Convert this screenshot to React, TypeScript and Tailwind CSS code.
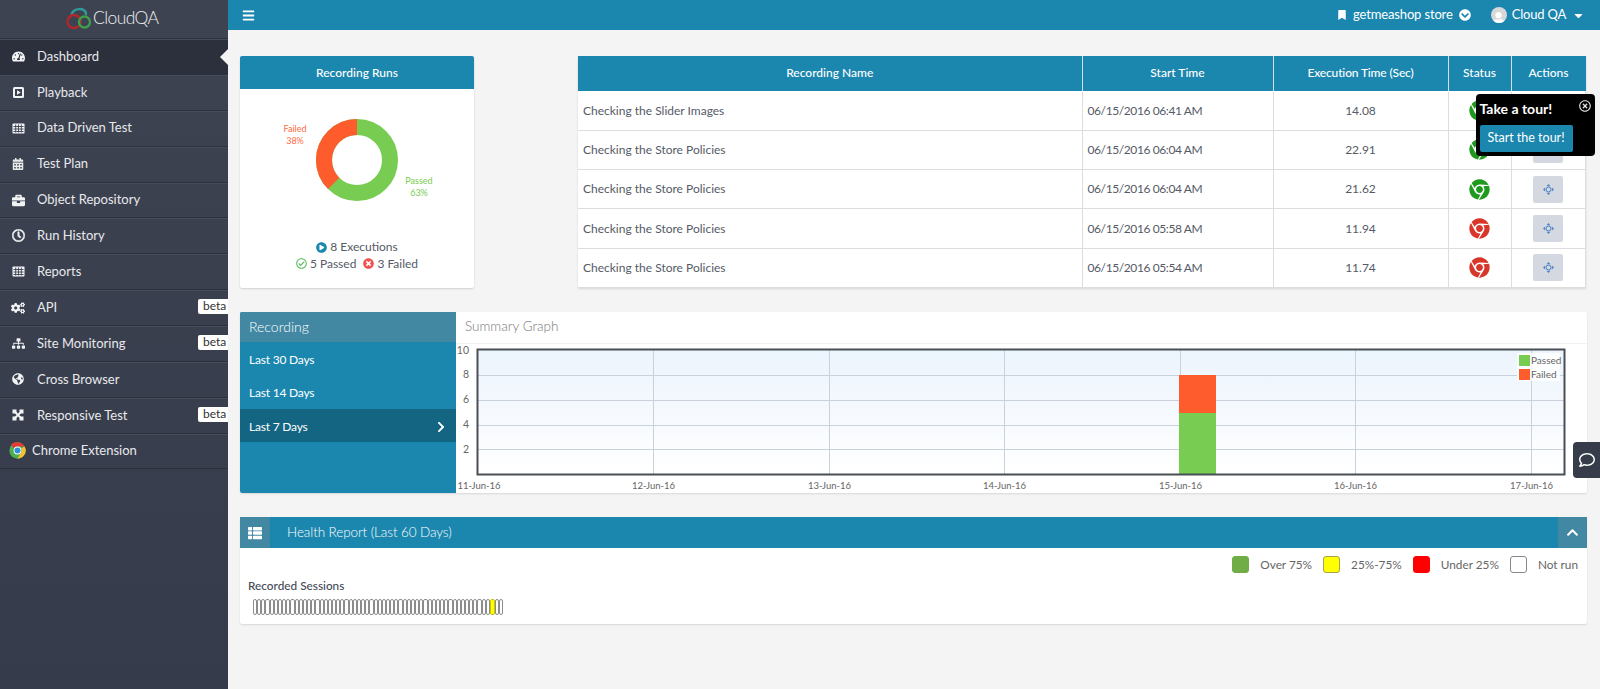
import React from "react";
import {
  FaTachometerAlt, FaCalendarAlt, FaBriefcase, FaRegClock, FaCogs, FaSitemap,
  FaGlobeAmericas, FaBars, FaBookmark, FaChevronCircleDown, FaUser, FaCaretDown, FaChrome,
  FaThList, FaChevronUp, FaChevronRight, FaPlayCircle, FaRegCheckCircle, FaTimesCircle, FaRegTimesCircle, FaRegComment,
} from "react-icons/fa";

function PlayBox() {
  return (
    <svg width="13" height="13" viewBox="0 0 13 13">
      <rect x="1" y="1" width="11" height="11" rx="1.500" fill="#f2f3f5" />
      <rect x="3" y="3" width="7" height="7" fill="#3a404e" />
      <path d="M5 4.200 L8.800 6.500 L5 8.800 Z" fill="#f2f3f5" />
    </svg>
  );
}

function GridIcon() {
  return (
    <svg width="13" height="11" viewBox="0 0 13 11">
      <rect x="0.500" y="0.500" width="12" height="10" rx="0.800" fill="#f2f3f5" />
      <path d="M3.700 1.500V9.500M6.500 1.500V9.500M9.300 1.500V9.500M1.500 3.500H11.500M1.500 6H11.500M1.500 8.500H11.500" stroke="#3a404e" strokeWidth="0.900" fill="none" />
    </svg>
  );
}

function ResponsiveIcon() {
  return (
    <svg width="12" height="12" viewBox="0 0 12 12" fill="#f2f3f5">
      <path d="M0.500 0.500H4.500V4.500H0.500ZM7.500 0.500H11.500V4.500H7.500ZM0.500 7.500H4.500V11.500H0.500ZM7.500 7.500H11.500V11.500H7.500Z" />
      <path d="M3 3L9 9M9 3L3 9" stroke="#f2f3f5" strokeWidth="2" />
    </svg>
  );
}

function Dash() { return <FaTachometerAlt className="text-[13px] text-[#f2f3f5]" />; }
function Cal() { return <FaCalendarAlt className="text-[12px] text-[#e8ece8]" />; }
function Brief() { return <FaBriefcase className="text-[13px] text-[#f2f3f5]" />; }
function Clock() { return <FaRegClock className="text-[13px] text-[#f2f3f5] stroke-[20px]" />; }
function Cogs() { return <FaCogs className="text-[14px] text-[#f2f3f5]" />; }
function Site() { return <FaSitemap className="text-[13px] text-[#f2f3f5]" />; }
function Globe() { return <FaGlobeAmericas className="text-[12px] text-[#f2f3f5]" />; }

const nav = [
  { label: "Dashboard", Icon: Dash, active: true },
  { label: "Playback", Icon: PlayBox },
  { label: "Data Driven Test", Icon: GridIcon },
  { label: "Test Plan", Icon: Cal },
  { label: "Object Repository", Icon: Brief },
  { label: "Run History", Icon: Clock },
  { label: "Reports", Icon: GridIcon },
  { label: "API", Icon: Cogs, beta: true },
  { label: "Site Monitoring", Icon: Site, beta: true },
  { label: "Cross Browser", Icon: Globe },
  { label: "Responsive Test", Icon: ResponsiveIcon, beta: true },
];

const rows = [
  ["Checking the Slider Images", "06/15/2016 06:41 AM", "14.08", "text-[#1f9a1f]"],
  ["Checking the Store Policies", "06/15/2016 06:04 AM", "22.91", "text-[#1f9a1f]"],
  ["Checking the Store Policies", "06/15/2016 06:04 AM", "21.62", "text-[#1f9a1f]"],
  ["Checking the Store Policies", "06/15/2016 05:58 AM", "11.94", "text-[#d9362b]"],
  ["Checking the Store Policies", "06/15/2016 05:54 AM", "11.74", "text-[#d9362b]"],
];

function ChromeLogo() {
  return (
    <svg width="17" height="17" viewBox="0 0 48 48">
      <circle cx="24" cy="24" r="23" fill="#4caf50" />
      <path d="M24 1a23 23 0 0 1 20 11.500H24a12 12 0 0 0-10.400 6L6 6.500A23 23 0 0 1 24 1z" fill="#e53935" />
      <path d="M44 12.500A23 23 0 0 1 24 47l10.400-17.500A12 12 0 0 0 34.400 18z" fill="#fbc02d" />
      <circle cx="24" cy="24" r="11" fill="#fff" />
      <circle cx="24" cy="24" r="8.500" fill="#2f8fd8" />
    </svg>
  );
}

function Logo() {
  return (
    <svg width="26" height="22" viewBox="0 0 26 22" fill="none" strokeWidth="2.400">
      <path d="M6 9 C4 1 21 -1 20 8" stroke="#2f9a98" />
      <circle cx="8" cy="14.500" r="6.500" stroke="#b3262a" />
      <circle cx="18.500" cy="15" r="5.500" stroke="#3f9e4b" />
    </svg>
  );
}

function MoveIcon() {
  return (
    <svg width="11" height="11" viewBox="0 0 11 11" fill="#4a84c4">
      <path d="M5.500 0L7.500 2.200H3.500ZM5.500 11L3.500 8.800H7.500ZM0 5.500L2.200 3.500V7.500ZM11 5.500L8.800 7.500V3.500Z" />
      <circle cx="5.500" cy="5.500" r="2.400" fill="none" stroke="#4a84c4" strokeWidth="1" />
    </svg>
  );
}

function Sidebar() {
  return (
    <aside className="w-[228px] shrink-0 min-h-[689px] bg-gradient-to-b from-[#3d4351] to-[#353b4a] text-[#e8e9ec]">
      <div className="h-[38px] flex items-center pl-[66px] gap-[1px] pb-[2px]">
        <Logo />
        <span className="text-[17.500px] font-light text-[#eef0f2] tracking-[-0.6px]">CloudQA</span>
      </div>
      {nav.map(({ label, Icon, active, beta }) => (
        <div
          key={label}
          className={`relative h-[35.900px] flex items-center border-t border-t-[#2d313d] shadow-[inset_0_1px_0_#474c5a] text-[13px] ${active ? "bg-[#2c2f3c]" : ""}`}
        >
          <span className="w-[37px] pr-[1px] flex justify-center shrink-0">
            <Icon />
          </span>
          <span>{label}</span>
          {beta && (
            <span className="absolute right-0 top-[9px] w-[30px] h-[15px] leading-[14px] pl-[5px] bg-white text-[#333] text-[12px] rounded-l-[2px]">
              beta
            </span>
          )}
          {active && (
            <span className="absolute right-0 top-[10px] w-0 h-0 border-y-[8px] border-y-transparent border-r-[8px] border-r-[#f4f4f4]" />
          )}
        </div>
      ))}
      <div className="h-[36px] flex items-center border-y border-[#2d313d] shadow-[inset_0_1px_0_#474c5a] text-[13px]">
        <span className="pl-[9px] pr-[6px] flex"><ChromeLogo /></span>
        <span>Chrome Extension</span>
      </div>
    </aside>
  );
}

function Topbar() {
  return (
    <header className="h-[30px] bg-[#1b86ae] flex items-center text-white text-[13px] pl-[14px] pr-[15px]">
      <FaBars className="text-[13px]" />
      <div className="ml-auto flex items-center">
        <FaBookmark className="text-[10px] mr-[6px]" />
        <span className="tracking-[-0.15px]">getmeashop store</span>
        <FaChevronCircleDown className="text-[12px] ml-[6px] mr-[20px]" />
        <span className="w-[16px] h-[16px] rounded-full bg-[#d8d8d8] overflow-hidden flex items-end justify-center mr-[5px]">
          <FaUser className="text-[13px] text-white translate-y-[2px]" />
        </span>
        <span className="tracking-[-0.2px]">Cloud QA</span>
        <FaCaretDown className="text-[13px] ml-[6px]" />
      </div>
    </header>
  );
}

function RunsCard() {
  return (
    <section className="w-[234px] h-[232px] shrink-0 bg-white rounded-[2px] shadow-[0_1px_2px_rgba(0,0,0,0.15)] flex flex-col">
      <div className="h-[33px] bg-[#1b86ae] text-white text-[12px] font-medium flex items-center justify-center rounded-t-[2px]">
        Recording Runs
      </div>
      <svg width="234" height="142" viewBox="0 0 234 142" className="block">
        <g transform="translate(117 71)">
          <circle r="33" fill="none" stroke="#77cc51" strokeWidth="16" />
          <circle
            r="33"
            fill="none"
            stroke="#ff5c2d"
            strokeWidth="16"
            pathLength="100"
            strokeDasharray="37.500 62.500"
            transform="rotate(-90) scale(1 -1)"
          />
        </g>
        <text x="55" y="43" textAnchor="middle" fontSize="9" fill="#ff6a3f" fontFamily="Lato">Failed</text>
        <text x="55" y="55" textAnchor="middle" fontSize="9" fill="#ff6a3f" fontFamily="Lato">38%</text>
        <text x="179" y="95" textAnchor="middle" fontSize="9" fill="#77cc51" fontFamily="Lato">Passed</text>
        <text x="179" y="107" textAnchor="middle" fontSize="9" fill="#77cc51" fontFamily="Lato">63%</text>
      </svg>
      <div className="mt-[8px] flex items-center justify-center gap-[3px] text-[12px] text-[#555a66] h-[16px]">
        <FaPlayCircle className="text-[11px] text-[#1b86ae]" /> 8 Executions
      </div>
      <div className="flex items-center justify-center text-[12px] text-[#555a66] h-[17px]">
        <FaRegCheckCircle className="text-[11px] text-[#5cb85c] mr-[3px]" /> 5 Passed
        <FaTimesCircle className="text-[11px] text-[#ef5350] ml-[7px] mr-[3px]" /> 3 Failed
      </div>
    </section>
  );
}

function RunsTable() {
  return (
    <div className="ml-auto mr-[1px] w-[1008px] h-[232px] bg-white shadow-[0_1px_2px_rgba(0,0,0,0.12)]">
      <table className="w-full table-fixed border-collapse text-[12px] text-[#555a66]">
        <colgroup>
          <col className="w-[504px]" />
          <col className="w-[191px]" />
          <col className="w-[175px]" />
          <col className="w-[63px]" />
          <col />
        </colgroup>
        <thead>
          <tr className="h-[35px] bg-[#1b86ae] text-white text-[12px]">
            {["Recording Name", "Start Time", "Execution Time (Sec)", "Status", "Actions"].map((h, i) => (
              <th key={h} className={`font-medium text-center border-b border-b-white ${i < 4 ? "border-r border-r-[#cfe3ec]" : ""} ${i === 2 ? "tracking-[-0.15px]" : ""}`}>
                {h}
              </th>
            ))}
          </tr>
        </thead>
        <tbody>
          {rows.map((r, i) => (
            <tr key={i} className="h-[39.300px] border-b border-[#dddddd]">
              <td className="pl-[5px] border-r border-[#dddddd]">{r[0]}</td>
              <td className="pl-[5px] border-r border-[#dddddd] tracking-[-0.4px]">{r[1]}</td>
              <td className="text-center border-r border-[#dddddd]">{r[2]}</td>
              <td className="border-r border-[#dddddd]">
                <span className="flex justify-center"><FaChrome className={`text-[21px] ${r[3]}`} /></span>
              </td>
              <td className="border-r border-[#dddddd]">
                <span className="mx-auto w-[30px] h-[27px] bg-[#d3d8e1] rounded-[2px] flex items-center justify-center">
                  <MoveIcon />
                </span>
              </td>
            </tr>
          ))}
        </tbody>
      </table>
    </div>
  );
}

function Chart() {
  const xs = [1, 176.500, 352.500, 527.500, 703.500, 878.500, 1054.500];
  const dates = ["11-Jun-16", "12-Jun-16", "13-Jun-16", "14-Jun-16", "15-Jun-16", "16-Jun-16", "17-Jun-16"];
  const ys = [26.500, 51.500, 76.500, 100.500];
  return (
    <svg width="1131" height="149" viewBox="0 0 1131 149" className="block" fontFamily="Lato">
      <defs>
        <linearGradient id="plotBg" x1="0" y1="0" x2="0" y2="1">
          <stop offset="0" stopColor="#ecf4fd" />
          <stop offset="1" stopColor="#ffffff" />
        </linearGradient>
      </defs>
      <g transform="translate(21 5)">
        <rect x="0" y="0" width="1087" height="125" fill="url(#plotBg)" />
        {ys.map((y) => <line key={y} x1="0" x2="1087" y1={y} y2={y} stroke="#c9d2dc" />)}
        {xs.slice(1).map((x) => <line key={x} x1={x} x2={x} y1="0" y2="125" stroke="#c9d2dc" />)}
        <rect x="702" y="64" width="37" height="61" fill="#77cc51" />
        <rect x="702" y="26" width="37" height="38" fill="#ff5c2d" />
        <rect x="0.500" y="0.500" width="1087" height="125" fill="none" stroke="#4a4f57" strokeWidth="2" />
        <rect x="1040" y="4" width="43" height="28" fill="#ffffff" opacity="0.85" />
        <rect x="1042" y="6" width="11" height="11" fill="#77cc51" />
        <rect x="1042" y="20" width="11" height="11" fill="#ff5c2d" />
        <text x="1054" y="15" fontSize="10" fill="#666">Passed</text>
        <text x="1054" y="29" fontSize="10" fill="#666">Failed</text>
      </g>
      {[["10", 6], ["8", 30], ["6", 55], ["4", 80], ["2", 105]].map(([t, y]) => (
        <text key={t} x="13" y={Number(y) + 4} textAnchor="end" fontSize="10.500" fill="#666">{t}</text>
      ))}
      {dates.map((d, i) => (
        <text key={d} x={i === 0 ? 23 : xs[i] + 21} y="145" textAnchor="middle" fontSize="9.500" fill="#666">{d}</text>
      ))}
    </svg>
  );
}

function SummaryPanel() {
  const item = "flex items-center pl-[9px] pt-[2px] text-[12px] tracking-[-0.2px]";
  return (
    <section className="mt-[24px] h-[181px] flex bg-white rounded-[2px] shadow-[0_1px_2px_rgba(0,0,0,0.12)]">
      <div className="w-[216px] shrink-0 bg-[#1b86ae] text-white rounded-l-[2px]">
        <div className="h-[30px] bg-[#4388a3] flex items-center pl-[9px] pb-[2px] text-[14px] font-light rounded-tl-[2px]">Recording</div>
        <div className={`h-[33px] ${item}`}>Last 30 Days</div>
        <div className={`h-[34px] ${item}`}>Last 14 Days</div>
        <div className={`h-[33px] justify-between pr-[9px] bg-[#136582] ${item}`}>
          Last 7 Days <FaChevronRight className="text-[12px]" />
        </div>
      </div>
      <div className="flex-1 min-w-0">
        <div className="h-[32px] flex items-center pl-[9px] pb-[2px] text-[13.500px] font-light text-[#777] border-b border-b-[#f0f0f0]">
          Summary Graph
        </div>
        <Chart />
      </div>
    </section>
  );
}

function HealthPanel() {
  const legend = [
    ["Over 75%", "bg-[#70ad47] border-[#70ad47]"],
    ["25%-75%", "bg-[#ffff00] border-[#a8a34a]"],
    ["Under 25%", "bg-[#ff0000] border-[#ff0000]"],
    ["Not run", "bg-white border-[#888]"],
  ];
  return (
    <section className="mt-[24px] h-[107px] bg-white rounded-[2px] shadow-[0_1px_2px_rgba(0,0,0,0.12)] flex flex-col">
      <div className="h-[31px] shrink-0 bg-[#1b86ae] flex items-center text-white rounded-t-[2px]">
        <span className="w-[30px] h-full bg-[#4388a3] flex items-center justify-center"><FaThList className="text-[14px]" /></span>
        <span className="ml-[17px] text-[13.500px] font-light tracking-[-0.1px]">Health Report (Last 60 Days)</span>
        <span className="ml-auto w-[29px] h-full bg-[#4388a3] flex items-center justify-center"><FaChevronUp className="text-[13px]" /></span>
      </div>
      <div className="flex justify-end items-center gap-[11px] pr-[9px] mt-[8px] text-[11.800px] text-[#666]">
        {legend.map(([t, c]) => (
          <span key={t} className="flex items-center gap-[11px]">
            <span className={`w-[17px] h-[17px] rounded-[3px] border ${c}`} />
            {t}
          </span>
        ))}
      </div>
      <div className="pl-[8px] mt-[3px] text-[11.800px] font-medium text-[#444a55]">Recorded Sessions</div>
      <div className="ml-[13px] mt-[5px] flex">
        {Array.from({ length: 60 }, (_, i) => (
          <span
            key={i}
            className={`h-[16px] rounded-[2px] border ${i === 57 ? "w-[5px] bg-[#ffff00] border-[#c8c400]" : "w-[4.160px] bg-white border-[#8c8c8c]"}`}
          />
        ))}
      </div>
    </section>
  );
}

export default function App() {
  return (
    <div className="relative w-[1600px] h-[689px] overflow-hidden flex bg-[#f4f4f4] font-['Lato',sans-serif]">
      <Sidebar />
      <main className="flex-1 min-w-0">
        <Topbar />
        <div className="pt-[26px] pl-[12px] pr-[13px]">
          <div className="flex">
            <RunsCard />
            <RunsTable />
          </div>
          <SummaryPanel />
          <HealthPanel />
        </div>
      </main>
      <div className="absolute left-[1476px] top-[94px] w-[119px] h-[62px] bg-black rounded-[4px] text-white pl-[3.500px] pr-[4px] pt-[5px]">
        <div className="text-[14px] font-bold leading-[20px]">Take a tour!</div>
        <FaRegTimesCircle className="absolute right-[4px] top-[6px] text-[12px] text-[#e6e6e6]" />
        <div className="mt-[6px] w-[93px] h-[27px] bg-[#1b86ae] rounded-[2px] text-[12.500px] flex items-center justify-center">
          Start the tour!
        </div>
      </div>
      <div className="absolute left-[1573px] top-[442px] w-[27px] h-[36px] bg-[#373c4b] rounded-l-[4px] flex items-center justify-center">
        <FaRegComment className="text-[16px] text-white" />
      </div>
    </div>
  );
}
